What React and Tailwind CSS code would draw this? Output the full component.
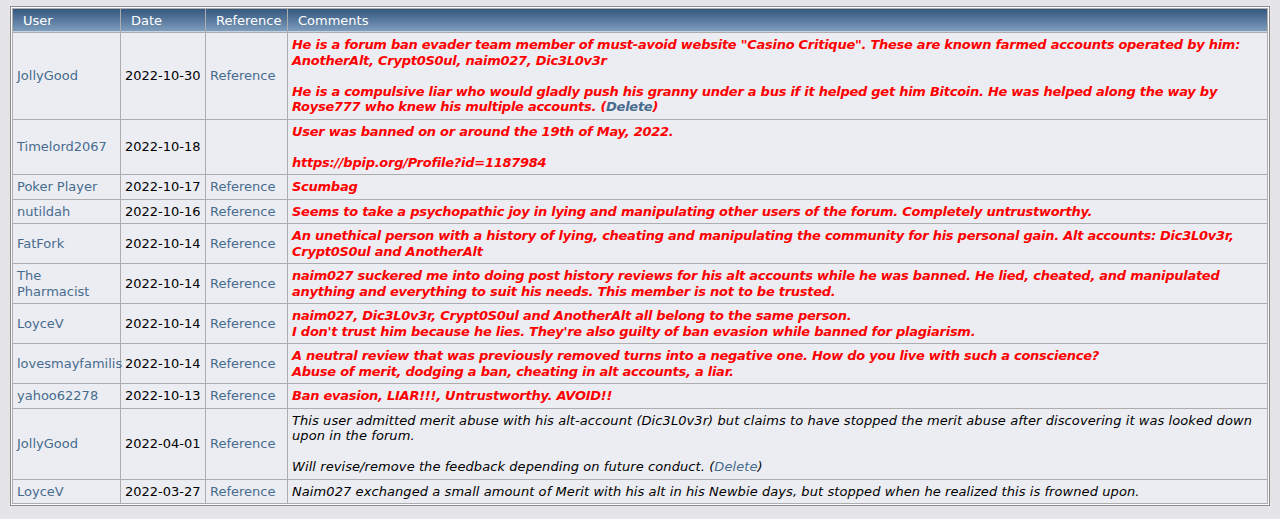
const rows = [
  {
    user: "JollyGood",
    date: "2022-10-30",
    ref: true,
    red: true,
    lines: [
      'He is a forum ban evader team member of must-avoid website "Casino Critique". These are known farmed accounts operated by him:',
      "AnotherAlt, Crypt0S0ul, naim027, Dic3L0v3r",
      "",
      "He is a compulsive liar who would gladly push his granny under a bus if it helped get him Bitcoin. He was helped along the way by",
      "Royse777 who knew his multiple accounts.",
    ],
    del: true,
  },
  {
    user: "Timelord2067",
    date: "2022-10-18",
    ref: false,
    red: true,
    lines: [
      "User was banned on or around the 19th of May, 2022.",
      "",
      "https://bpip.org/Profile?id=1187984",
    ],
  },
  { user: "Poker Player", date: "2022-10-17", ref: true, red: true, lines: ["Scumbag"] },
  {
    user: "nutildah",
    date: "2022-10-16",
    ref: true,
    red: true,
    lines: [
      "Seems to take a psychopathic joy in lying and manipulating other users of the forum. Completely untrustworthy.",
    ],
  },
  {
    user: "FatFork",
    date: "2022-10-14",
    ref: true,
    red: true,
    lines: [
      "An unethical person with a history of lying, cheating and manipulating the community for his personal gain. Alt accounts: Dic3L0v3r,",
      "Crypt0S0ul and AnotherAlt",
    ],
  },
  {
    user: "The Pharmacist",
    date: "2022-10-14",
    ref: true,
    red: true,
    lines: [
      "naim027 suckered me into doing post history reviews for his alt accounts while he was banned. He lied, cheated, and manipulated",
      "anything and everything to suit his needs. This member is not to be trusted.",
    ],
  },
  {
    user: "LoyceV",
    date: "2022-10-14",
    ref: true,
    red: true,
    lines: [
      "naim027, Dic3L0v3r, Crypt0S0ul and AnotherAlt all belong to the same person.",
      "I don't trust him because he lies. They're also guilty of ban evasion while banned for plagiarism.",
    ],
  },
  {
    user: "lovesmayfamilis",
    date: "2022-10-14",
    ref: true,
    red: true,
    lines: [
      "A neutral review that was previously removed turns into a negative one. How do you live with such a conscience?",
      "Abuse of merit, dodging a ban, cheating in alt accounts, a liar.",
    ],
  },
  {
    user: "yahoo62278",
    date: "2022-10-13",
    ref: true,
    red: true,
    lines: ["Ban evasion, LIAR!!!, Untrustworthy. AVOID!!"],
  },
  {
    user: "JollyGood",
    date: "2022-04-01",
    ref: true,
    red: false,
    lines: [
      "This user admitted merit abuse with his alt-account (Dic3L0v3r) but claims to have stopped the merit abuse after discovering it was looked down",
      "upon in the forum.",
      "",
      "Will revise/remove the feedback depending on future conduct.",
    ],
    del: true,
  },
  {
    user: "LoyceV",
    date: "2022-03-27",
    ref: true,
    red: false,
    lines: [
      "Naim027 exchanged a small amount of Merit with his alt in his Newbie days, but stopped when he realized this is frowned upon.",
    ],
  },
];

const th =
  "text-left font-normal text-white pl-[10px] pr-1 pt-[4px] pb-[3px] leading-[15px] bg-gradient-to-b from-[#34577e] to-[#7e9dbd] border-b border-[#c5d2e0]";
const td = "bg-[#ecedf3] px-1 py-1 align-middle";

export default function App() {
  return (
    <div className="min-h-screen bg-[#e5e5e8] px-[10px] pt-[6px] font-['DejaVu_Sans',Verdana,sans-serif] text-[13px] leading-[15.5px]">
      <div className="border border-[#8c8c8c] bg-[#fbfbfb] p-px">
        <table className="w-full table-fixed border-separate border-spacing-px bg-[#adadad]">
          <colgroup>
            <col className="w-[107px]" />
            <col className="w-[84px]" />
            <col className="w-[81px]" />
            <col />
          </colgroup>
          <thead>
            <tr>
              <th className={th}>User</th>
              <th className={th}>Date</th>
              <th className={th}>Reference</th>
              <th className={th}>Comments</th>
            </tr>
          </thead>
          <tbody>
            {rows.map((r, i) => (
              <tr key={i}>
                <td className={`${td} text-[#476c8e]`}>{r.user}</td>
                <td className={`${td} text-black whitespace-nowrap`}>{r.date}</td>
                <td className={`${td} text-[#476c8e]`}>{r.ref ? "Reference" : ""}</td>
                <td
                  className={`${td} italic whitespace-nowrap ${
                    r.red
                      ? "text-[#ff0000] font-bold tracking-[-0.26px]"
                      : "text-black tracking-[0.08px]"
                  }`}
                >
                  {r.lines.map((l, j) => (
                    <div key={j} className="h-[15.5px]">
                      {l}
                      {r.del && j === r.lines.length - 1 && (
                        <>
                          {" "}(<span className="text-[#476c8e]">Delete</span>)
                        </>
                      )}
                    </div>
                  ))}
                </td>
              </tr>
            ))}
          </tbody>
        </table>
      </div>
    </div>
  );
}
